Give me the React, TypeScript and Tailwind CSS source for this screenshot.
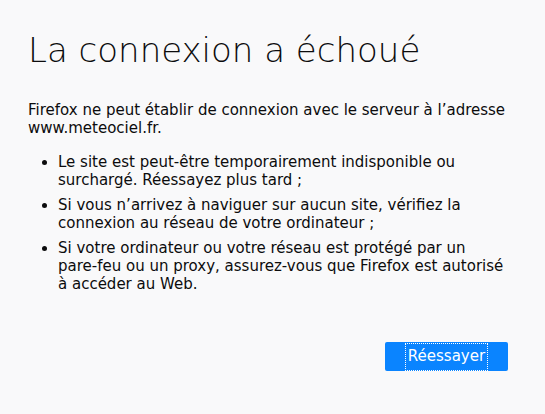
import React from 'react'

const reasons = [
  'Le site est peut-être temporairement indisponible ou surchargé. Réessayez plus tard ;',
  'Si vous n’arrivez à naviguer sur aucun site, vérifiez la connexion au réseau de votre ordinateur ;',
  'Si votre ordinateur ou votre réseau est protégé par un pare-feu ou un proxy, assurez-vous que Firefox est autorisé à accéder au Web.',
]

export default function App() {
  return (
    <div className="min-h-screen w-full bg-[#f9f9fa] text-[#0c0c0d] font-['DejaVu_Sans',sans-serif]">
      <div className="w-[480px] ml-[28px] pt-[30px]">
        {/* Title */}
        <h1 className="text-[34px] font-extralight leading-[40px]">La connexion a échoué</h1>

        {/* Description */}
        <p className="mt-[31px] text-[15px] leading-[18px]">
          Firefox ne peut établir de connexion avec le serveur à l’adresse www.meteociel.fr.
        </p>

        <ul className="mt-[16px] pl-[30px] list-disc text-[15px] leading-[18px]">
          {reasons.map((r) => (
            <li key={r} className="mb-[7px]">
              {r}
            </li>
          ))}
        </ul>

        {/* Retry */}
        <div className="flex justify-end mt-[49px]">
          <button className="h-[29px] w-[123px] rounded-[2px] bg-[#0a84ff] text-white text-[15px] flex items-center justify-center">
            <span className="h-[28px] px-[2px] flex items-center border border-dotted border-white">Réessayer</span>
          </button>
        </div>
      </div>
    </div>
  )
}
